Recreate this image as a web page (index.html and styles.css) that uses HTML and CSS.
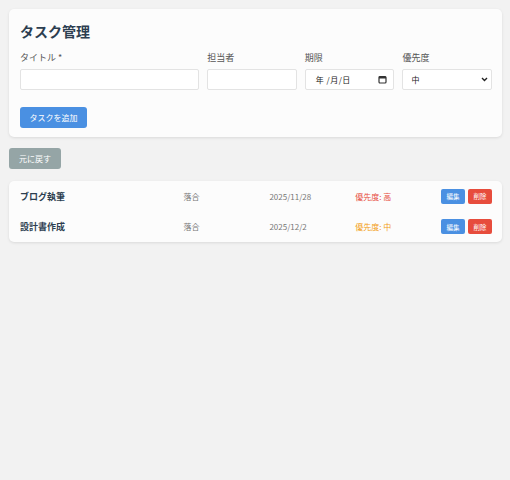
FILE: index.html
```html
<!DOCTYPE html>
<html lang="ja">
<head>
<meta charset="utf-8">
<link rel="stylesheet" href="styles.css">
</head>
<body>
<div class="page">
  <section class="card form-card">
    <h1 class="title">タスク管理</h1>
    <div class="fields">
      <div class="field">
        <label class="label">タイトル *</label>
        <input class="input" type="text">
      </div>
      <div class="field">
        <label class="label">担当者</label>
        <input class="input" type="text">
      </div>
      <div class="field">
        <label class="label">期限</label>
        <div class="input date">
          <span class="date-text">年 /月/日</span>
          <svg class="cal" width="9" height="9" viewBox="0 0 9 9"><rect x="1" y="1.5" width="7" height="6.5" rx="1" fill="none" stroke="#333" stroke-width="1.2"/><rect x="1" y="1.5" width="7" height="2" fill="#333"/></svg>
        </div>
      </div>
      <div class="field">
        <label class="label">優先度</label>
        <div class="input select">
          <span>中</span>
          <svg class="chev" width="7" height="5" viewBox="0 0 7 5"><path d="M1 1 L3.5 3.5 L6 1" fill="none" stroke="#222" stroke-width="1.4"/></svg>
        </div>
      </div>
    </div>
    <button class="btn btn-primary">タスクを追加</button>
  </section>

  <div class="undo-row">
    <button class="btn btn-gray">元に戻す</button>
  </div>

  <section class="card list-card">
    <div class="row">
      <span class="name">ブログ執筆</span>
      <span class="meta">落合</span>
      <span class="meta">2025/11/28</span>
      <span class="prio high">優先度: 高</span>
      <span class="actions"><button class="sbtn edit">編集</button><button class="sbtn del">削除</button></span>
    </div>
    <div class="row">
      <span class="name">設計書作成</span>
      <span class="meta">落合</span>
      <span class="meta">2025/12/2</span>
      <span class="prio mid">優先度: 中</span>
      <span class="actions"><button class="sbtn edit">編集</button><button class="sbtn del">削除</button></span>
    </div>
  </section>
</div>
</body>
</html>
```

FILE: styles.css
```css
* { box-sizing: border-box; }
html, body {
  margin: 0;
  background: #f2f2f2;
  font-family: "Noto Sans CJK JP", "Noto Sans", sans-serif;
  color: #2c3e50;
}
.page {
  padding: 9px 8px 9px 9px;
  display: flex;
  flex-direction: column;
}
.card {
  background: #fcfcfc;
  border-radius: 5px;
  box-shadow: 0 1px 3px rgba(0,0,0,0.10);
}
.form-card {
  padding: 12px 10px 9px 11px;
}
.title {
  margin: 0;
  font-size: 14px;
  line-height: 20px;
  font-weight: 700;
  color: #2c3e50;
}
.fields {
  display: grid;
  grid-template-columns: minmax(0, 2fr) repeat(3, minmax(0, 1fr));
  column-gap: 8px;
  margin-top: 11px;
}
.field {
  display: flex;
  flex-direction: column;
  min-width: 0;
}
.label {
  font-size: 9px;
  line-height: 12px;
  color: #555;
  margin-bottom: 5px;
}
.input {
  width: 100%;
  height: 21px;
  border: 1px solid #e3e3e3;
  border-radius: 2px;
  background: #fff;
  font-family: inherit;
  font-size: 8px;
  padding: 0 8px;
  display: flex;
  align-items: center;
  color: #222;
}
.date { justify-content: space-between; padding: 0 6px 0 10px; }
.date-text { letter-spacing: 0.5px; }
.select { justify-content: space-between; padding: 0 3px 0 8px; }
.btn {
  border: none;
  border-radius: 3px;
  color: #fff;
  font-family: inherit;
  font-size: 8px;
  height: 21px;
  padding: 0;
  cursor: pointer;
}
.btn-primary {
  background: #4a90e2;
  margin-top: 17px;
  width: 67px;
}
.btn-gray {
  background: #95a5a6;
  width: 52px;
}
.undo-row {
  margin-top: 11px;
  display: flex;
}
.list-card {
  margin-top: 12px;
  padding: 0 10px 0 11px;
}
.row {
  display: grid;
  grid-template-columns: minmax(0, 2fr) repeat(3, minmax(0, 1fr)) auto;
  column-gap: 8px;
  align-items: center;
  height: 30.5px;
}
.name {
  font-size: 9px;
  font-weight: 700;
  color: #2c3e50;
}
.meta {
  font-size: 8px;
  color: #777;
}
.prio { font-size: 8px; }
.high { color: #e74c3c; }
.mid { color: #f39c12; }
.actions {
  display: flex;
  gap: 3px;
}
.sbtn {
  border: none;
  border-radius: 2px;
  color: #fff;
  font-family: inherit;
  font-size: 6.5px;
  height: 15px;
  width: 24px;
  padding: 0;
}
.edit { background: #4a90e2; }
.del { background: #e74c3c; }
```
